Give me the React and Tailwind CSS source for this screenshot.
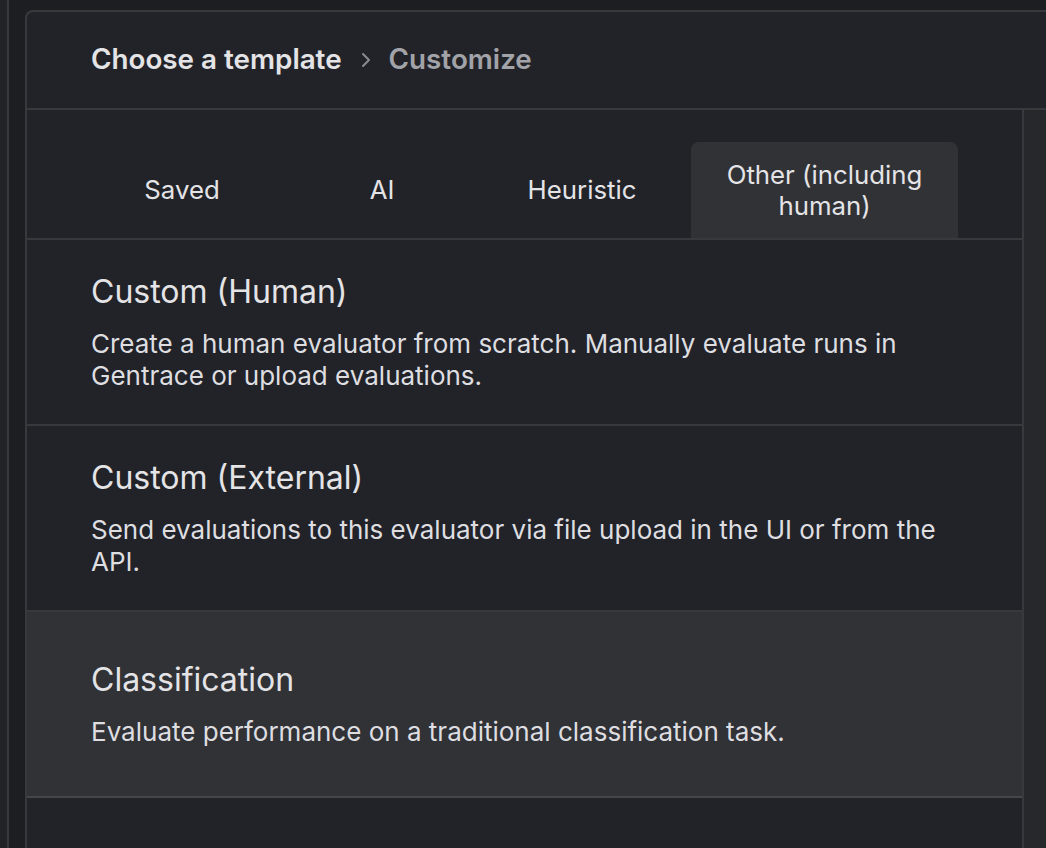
import React from 'react';

const tabs = [
  { label: 'Saved', width: 'w-[182px]' },
  { label: 'AI', width: 'w-[182px]' },
  { label: 'Heuristic', width: 'w-[182px]' },
];

const templates = [
  {
    title: 'Custom (Human)',
    description: 'Create a human evaluator from scratch. Manually evaluate runs in Gentrace or upload evaluations.',
  },
  {
    title: 'Custom (External)',
    description: 'Send evaluations to this evaluator via file upload in the UI or from the API.',
  },
  {
    title: 'Classification',
    description: 'Evaluate performance on a traditional classification task.',
    hovered: true,
  },
];

function ChevronRight() {
  return (
    <svg width="12" height="18" viewBox="0 0 12 18" fill="none" className="ml-[18px] mr-[17px]">
      <path d="M3 3 L9 9 L3 15" stroke="#8a8b90" strokeWidth="2" strokeLinecap="round" strokeLinejoin="round" />
    </svg>
  );
}

export default function App() {
  return (
    <div className="flex h-[848px] w-[1046px] overflow-hidden bg-[#1d1e22] font-['Inter',sans-serif] antialiased">
      {/* left gutter */}
      <div className="w-[7px] bg-[#222327]" />
      <div className="w-[2px] bg-[#38393d]" />
      <div className="w-[16px]" />

      {/* panel */}
      <div className="mt-[10px] flex min-w-0 flex-1 flex-col rounded-tl-[8px] border-l-2 border-t-2 border-[#38393d] bg-[#222328]">
        {/* breadcrumb header */}
        <div className="flex h-[98px] shrink-0 items-center border-b-2 border-[#38393d] pl-[64px]">
          <span className="text-[27.8px] font-semibold text-[#e4e4e7]">Choose a template</span>
          <ChevronRight />
          <span className="text-[27.8px] font-semibold text-[#a2a3a8]">Customize</span>
        </div>

        <div className="flex min-h-0 flex-1">
          <div className="flex w-[997px] shrink-0 flex-col border-r-2 border-[#38393d]">
            {/* tabs */}
            <div className="flex h-[130px] shrink-0 items-end gap-[18px] border-b-2 border-[#38393d] pl-[64px]">
              {tabs.map((tab) => (
                <div
                  key={tab.label}
                  className={`${tab.width} flex h-[96px] items-center justify-center text-[25.8px] leading-[32px] text-[#e4e4e7]`}
                >
                  {tab.label}
                </div>
              ))}
              <div className="flex h-[96px] w-[267px] items-center justify-center rounded-t-[8px] bg-[#313236] px-[30px] text-center text-[25.8px] leading-[31px] text-[#e4e4e7]">
                Other (including human)
              </div>
            </div>

            {/* template rows */}
            {templates.map((t) => (
              <div
                key={t.title}
                className={`flex h-[186px] shrink-0 flex-col justify-center border-b-2 px-[64px] ${
                  t.hovered ? 'border-[#45464a] bg-[#313236]' : 'border-[#38393d]'
                }`}
              >
                <div className="text-[32px] leading-[40px] text-[#e4e4e7]">{t.title}</div>
                <div className="mt-[16px] text-[26px] leading-[32px] text-[#dedee1]">{t.description}</div>
              </div>
            ))}
            <div className="flex-1" />
          </div>
          <div className="flex-1 bg-[#27282c]" />
        </div>
      </div>
    </div>
  );
}
